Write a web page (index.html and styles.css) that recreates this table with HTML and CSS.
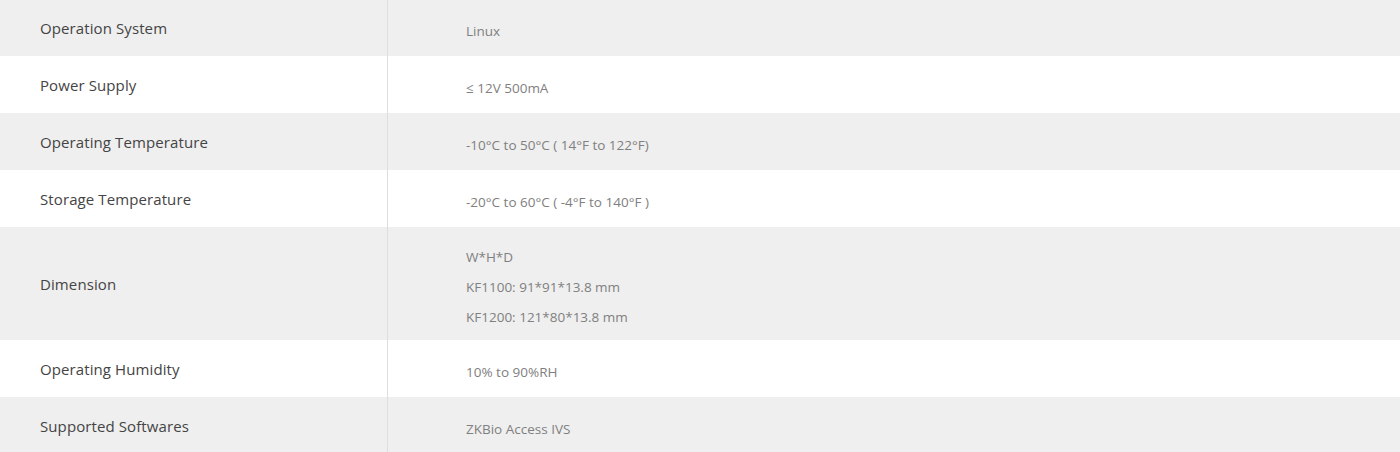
FILE: index.html
```html
<!DOCTYPE html>
<html>
<head>
<meta charset="utf-8">
<link rel="stylesheet" href="styles.css">
</head>
<body>
<table class="spec">
  <tr class="row gray"><td class="label">Operation System</td><td class="value">Linux</td></tr>
  <tr class="row"><td class="label">Power Supply</td><td class="value">≤ 12V 500mA</td></tr>
  <tr class="row gray"><td class="label">Operating Temperature</td><td class="value">-10°C to 50°C ( 14°F to 122°F)</td></tr>
  <tr class="row"><td class="label">Storage Temperature</td><td class="value">-20°C to 60°C ( -4°F to 140°F )</td></tr>
  <tr class="row gray tall"><td class="label">Dimension</td><td class="value">W*H*D<br>KF1100: 91*91*13.8 mm<br>KF1200: 121*80*13.8 mm</td></tr>
  <tr class="row"><td class="label">Operating Humidity</td><td class="value">10% to 90%RH</td></tr>
  <tr class="row gray"><td class="label">Supported Softwares</td><td class="value">ZKBio Access IVS</td></tr>
</table>
</body>
</html>
```
FILE: styles.css
```css
html, body {
  margin: 0;
  padding: 0;
  background: #ffffff;
}
.spec {
  width: 1400px;
  border-collapse: collapse;
  border-spacing: 0;
  margin-top: -1px;
}
.row {
  height: 57px;
}
.row.tall {
  height: 113px;
}
.gray {
  background: #efefef;
}
.label {
  width: 347px;
  padding: 0 0 0 40px;
  border-right: 1px solid #dedede;
  font-family: "Open Sans", sans-serif;
  font-size: 15px;
  letter-spacing: 0.1px;
  color: #444444;
  vertical-align: middle;
}
.value {
  padding: 6px 0 0 78px;
  font-family: "Open Sans", sans-serif;
  font-size: 13.5px;
  letter-spacing: 0;
  line-height: 30px;
  color: #808080;
  vertical-align: middle;
}
```
